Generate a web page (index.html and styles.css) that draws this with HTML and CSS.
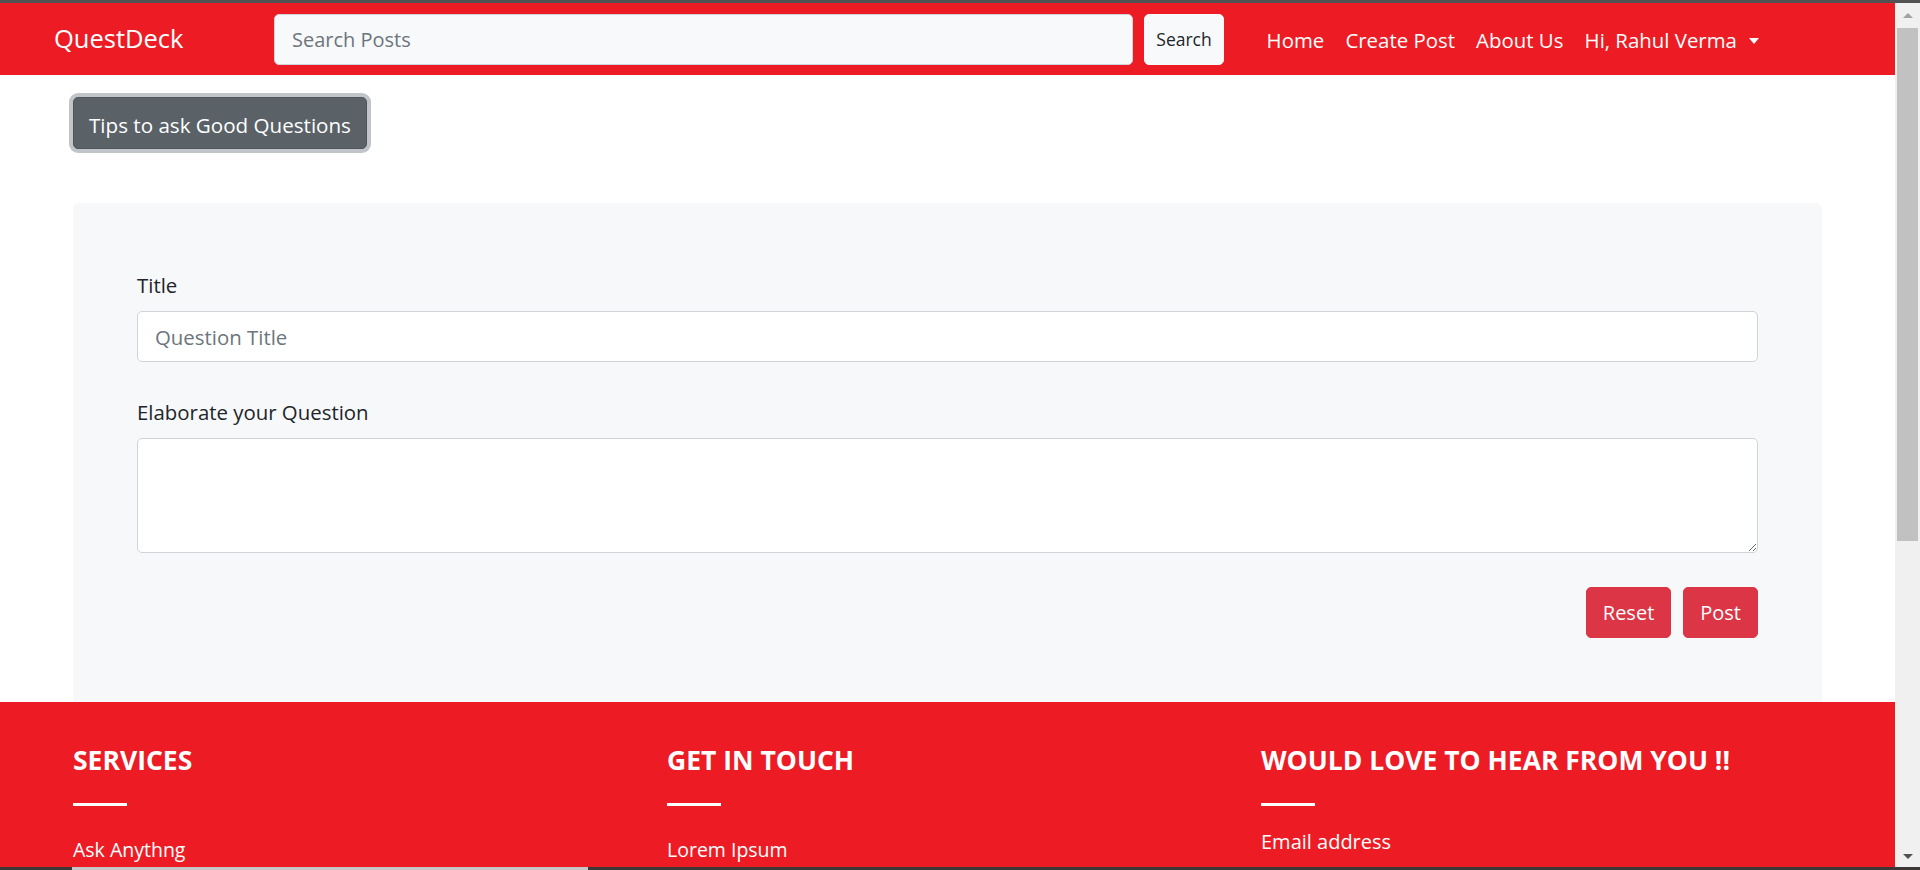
FILE: index.html
```html
<!DOCTYPE html>
<html lang="en">
<head>
<meta charset="utf-8">
<title>QuestDeck - Ask a Question</title>
<link rel="stylesheet" href="styles.css">
</head>
<body>
<div class="chrome-top"></div>
<div class="viewport">
  <div class="page">
    <nav class="navbar">
      <a class="brand" href="#">QuestDeck</a>
      <form class="search">
        <input class="search-input" type="search" placeholder="Search Posts">
        <button class="search-btn" type="button">Search</button>
      </form>
      <ul class="nav-links">
        <li class="nav-item">Home</li>
        <li class="nav-item">Create Post</li>
        <li class="nav-item">About Us</li>
        <li class="nav-item dropdown">Hi, Rahul Verma</li>
      </ul>
    </nav>

    <main class="content">
      <button class="tips-btn" type="button">Tips to ask Good Questions</button>
      <div class="card">
        <form class="ask-form">
          <div class="group">
            <label class="label" for="title">Title</label>
            <input class="control" id="title" type="text" placeholder="Question Title">
          </div>
          <div class="group group-last">
            <label class="label" for="desc">Elaborate your Question</label>
            <textarea class="control area" id="desc" rows="3"></textarea>
          </div>
          <div class="actions">
            <button class="btn-danger" type="reset">Reset</button>
            <button class="btn-danger" type="button">Post</button>
          </div>
        </form>
      </div>
    </main>

    <footer class="footer">
      <div class="f-col">
        <h5 class="f-head">SERVICES</h5>
        <div class="f-line"></div>
        <p class="f-item">Ask Anythng</p>
      </div>
      <div class="f-col">
        <h5 class="f-head">GET IN TOUCH</h5>
        <div class="f-line"></div>
        <p class="f-item">Lorem Ipsum</p>
      </div>
      <div class="f-col">
        <h5 class="f-head">WOULD LOVE TO HEAR FROM YOU !!</h5>
        <div class="f-line"></div>
        <p class="f-label">Email address</p>
      </div>
    </footer>
  </div>
  <div class="scrollbar">
    <div class="sb-btn"><span class="arrow-up"></span></div>
    <div class="sb-thumb"></div>
    <div class="sb-fill"></div>
    <div class="sb-btn"><span class="arrow-down"></span></div>
  </div>
</div>
<div class="chrome-bottom"><span class="seg"></span></div>
</body>
</html>
```
FILE: styles.css
```css
* { box-sizing: border-box; }

html, body {
  margin: 0;
  height: 870px;
  overflow: hidden;
}

body {
  font-family: "Open Sans", "Noto Sans", sans-serif;
  font-size: 20.4px;
  color: #212529;
  background: #fff;
  display: flex;
  flex-direction: column;
}

.chrome-top { height: 3px; flex: none; background: #525252; }
.chrome-bottom { height: 3px; flex: none; background: #3b3835; display: flex; }
.chrome-bottom .seg { margin-left: 72px; width: 516px; background: #c6c6c6; }

.viewport { flex: 1; min-height: 0; display: flex; }
.page { flex: 1; min-width: 0; display: flex; flex-direction: column; overflow: hidden; }

/* scrollbar */
.scrollbar { width: 25px; flex: none; background: #f0f0f0; display: flex; flex-direction: column; }
.sb-btn { height: 25px; flex: none; display: flex; align-items: center; justify-content: center; }
.arrow-up { width: 0; height: 0; border-left: 5px solid transparent; border-right: 5px solid transparent; border-bottom: 5px solid #a3a3a3; }
.arrow-down { width: 0; height: 0; border-left: 5px solid transparent; border-right: 5px solid transparent; border-top: 5px solid #505050; margin-top: 4px; }
.sb-thumb { height: 513px; margin: 0 2px; background: #c1c1c1; flex: none; }
.sb-fill { flex: 1; }

/* navbar */
.navbar {
  height: 72px;
  flex: none;
  background: #ed1c24;
  display: flex;
  align-items: center;
  padding-left: 54px;
}
.brand {
  width: 220px;
  color: #fff;
  font-size: 25.5px;
  text-decoration: none;
  line-height: 1;
}
.search { display: flex; align-items: center; }
.search-input {
  width: 859px;
  height: 51px;
  margin: 0 11px 0 0;
  padding: 0 17px;
  background: #f8f9fa;
  border: 1px solid #ced4da;
  border-radius: 5px;
  font-family: inherit;
  font-size: 20px;
  color: #495057;
}
.search-input::placeholder { color: #6c757d; }
.search-btn {
  width: 80px;
  height: 51px;
  background: #f8f9fa;
  border: 1px solid #f8f9fa;
  border-radius: 5px;
  font-family: inherit;
  font-size: 17.5px;
  color: #212529;
  padding: 0;
}
.nav-links { list-style: none; margin: 2px 0 0 32px; padding: 0; display: flex; }
.nav-item { padding: 0 10.6px; color: #fff; line-height: 32px; }
.dropdown::after {
  content: "";
  display: inline-block;
  margin-left: 12px;
  vertical-align: 4px;
  border-top: 6px solid #fff;
  border-left: 5.5px solid transparent;
  border-right: 5.5px solid transparent;
}

/* content */
.content { flex: none; padding: 22px 73px 0; }
.tips-btn {
  display: block;
  height: 52px;
  padding: 3px 15px 0;
  background: #5a6268;
  color: #fff;
  border: 1px solid #4e555b;
  border-radius: 5px;
  box-shadow: 0 0 0 4px #c1c5c9;
  font-family: inherit;
  font-size: 20.6px;
}
.card {
  margin-top: 54px;
  background: #f7f8fa;
  border-radius: 6px 6px 0 0;
  padding: 64px;
}
.label { display: block; line-height: 32px; padding-top: 2px; margin-bottom: 10px; }
.group { margin-bottom: 32px; }
.group-last { margin-bottom: 34px; }
.control {
  display: block;
  width: 100%;
  height: 51px;
  margin: 0;
  padding: 0 17px;
  background: #fff;
  border: 1px solid #ced4da;
  border-radius: 5px;
  font: inherit;
  color: #495057;
}
.control::placeholder { color: #6c757d; }
.area { height: 115px; padding: 8px 17px; resize: vertical; }
.actions { display: flex; justify-content: flex-end; gap: 12px; }
.btn-danger {
  height: 51px;
  padding: 0 16px;
  background: #dc3545;
  color: #fff;
  border: 1px solid #dc3545;
  border-radius: 5px;
  font-family: inherit;
  font-size: 20px;
}

/* footer */
.footer {
  flex: 1;
  background: #ed1c24;
  color: #fff;
  display: flex;
  padding: 42px 0 0 73px;
}
.f-col { width: 594px; flex: none; }
.f-head { margin: 0; font-size: 26.5px; font-weight: 700; line-height: 32px; }
.f-line { width: 54px; height: 3px; background: #fff; margin-top: 27px; }
.f-item { margin: 28px 0 0; line-height: 32px; font-size: 19.5px; }
.f-label { margin: 20px 0 0; line-height: 32px; font-size: 20px; }
```
